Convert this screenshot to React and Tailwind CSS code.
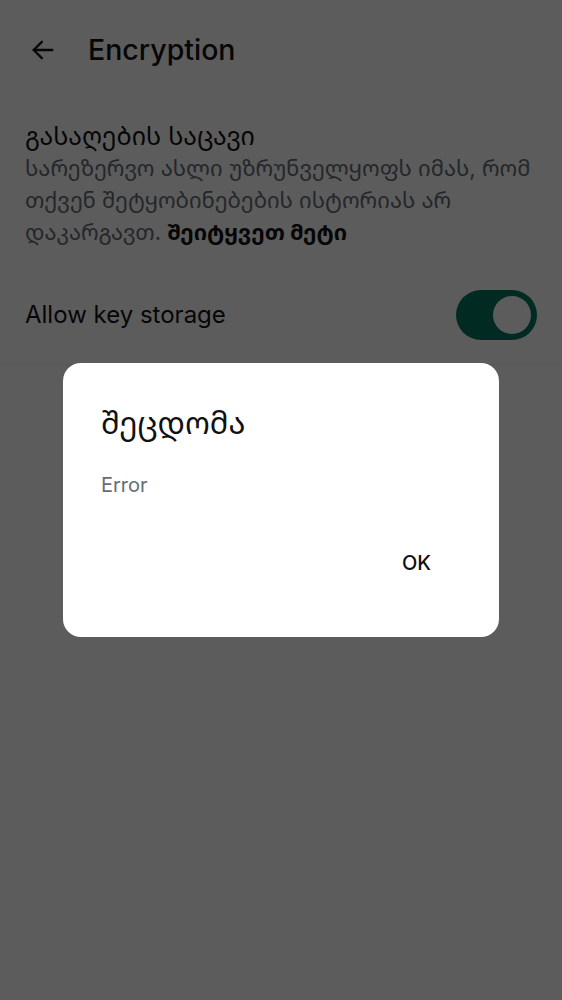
import React, { useState } from 'react';

const font = { fontFamily: 'Inter, "Noto Sans", "Noto Sans Georgian", "DejaVu Sans", sans-serif' };

const BackArrow = () => (
    <svg width="28" height="28" viewBox="0 0 24 24" fill="none" stroke="#111" strokeWidth="2" strokeLinecap="round" strokeLinejoin="round">
        <path d="M20 12H4" />
        <path d="M11 5l-7 7 7 7" />
    </svg>
);

const App = () => {
    const [on, setOn] = useState(true);
    const [open, setOpen] = useState(true);

    return (
        <div className="relative w-[562px] h-[1000px] bg-white overflow-hidden" style={font}>
            <header className="flex items-center h-[100px] pl-[29px]">
                <BackArrow />
                <h1 className="ml-[31px] text-[28.5px] font-medium text-[#111]">Encryption</h1>
            </header>

            <section className="px-[25px] pt-[20px]">
                <h2 className="text-[25px] leading-[32px] text-[#111]">გასაღების საცავი</h2>
                <p className="text-[22px] leading-[32px] text-[#656d76]">
                    სარეზერვო ასლი უზრუნველყოფს იმას, რომ თქვენ შეტყობინებების ისტორიას არ დაკარგავთ.{' '}
                    <span className="font-bold text-[#111]">შეიტყვეთ მეტი</span>
                </p>
            </section>

            <div className="flex items-center justify-between pl-[25px] pr-[25px] mt-[42px] pb-[24px] border-b border-[#f2f2f2]">
                <span className="text-[24px] text-[#111]">Allow key storage</span>
                <button
                    onClick={() => setOn(!on)}
                    className={`flex items-center w-[81px] h-[50px] rounded-full px-[6px] ${on ? 'bg-[#00765f] justify-end' : 'bg-gray-300 justify-start'}`}
                >
                    <span className="w-[38px] h-[38px] rounded-full bg-white" />
                </button>
            </div>

            {open && (
                <div className="absolute inset-0 bg-black/[0.64]">
                    <div className="absolute left-[63px] top-[363px] w-[436px] h-[274px] bg-white rounded-[18px] pl-[38px] pr-[68px] pt-[40px] flex flex-col">
                        <h3 className="text-[31px] leading-[40px] text-[#111]">შეცდომა</h3>
                        <p className="mt-[27px] text-[20px] text-[#656d76]">Error</p>
                        <div className="flex justify-end mt-[48px]">
                            <button onClick={() => setOpen(false)} className="text-[20px] font-medium text-[#111]">OK</button>
                        </div>
                    </div>
                </div>
            )}
        </div>
    );
};

export default App;
